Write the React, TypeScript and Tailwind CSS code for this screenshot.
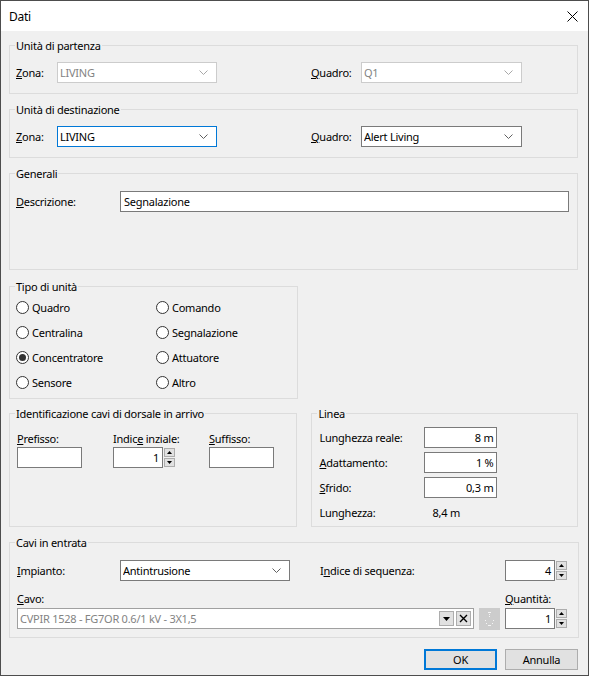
import type { ReactNode } from "react"

const font = "font-['Noto_Sans',sans-serif] text-[11px] leading-[15px] tracking-[-0.25px] text-black"

function Chevron({ disabled }: { disabled?: boolean }) {
  return (
    <svg width="9" height="5" viewBox="0 0 9 5" className="shrink-0">
      <path d="M0.5 0.5 L4.5 4.5 L8.5 0.5" fill="none" stroke={disabled ? "#a8a8a8" : "#606060"} strokeWidth="1" />
    </svg>
  )
}

function Combo({ value, w, state = "normal" }: { value: string; w: string; state?: "normal" | "focused" | "disabled" }) {
  const border =
    state === "focused" ? "border-[#0078d7]" : state === "disabled" ? "border-[#cccccc]" : "border-[#7a7a7a]"
  return (
    <div className={`${w} h-[21px] border ${border} bg-white flex items-center pl-[2px] pr-[8px]`}>
      <span className={`flex-1 truncate ${state === "disabled" ? "text-[#838383]" : ""}`}>{value}</span>
      <Chevron disabled={state === "disabled"} />
    </div>
  )
}

function TextBox({ value = "", w, right }: { value?: string; w: string; right?: boolean }) {
  return (
    <div className={`${w} h-[21px] border border-[#7a7a7a] bg-white flex items-center px-[3px] ${right ? "justify-end" : ""}`}>
      {value}
    </div>
  )
}

function Arrow({ up }: { up?: boolean }) {
  return (
    <svg width="5" height="3" viewBox="0 0 5 3">
      <path d={up ? "M2.5 0 L5 3 L0 3 Z" : "M0 0 L5 0 L2.5 3 Z"} fill="#000" />
    </svg>
  )
}

function Spinner({ value, w }: { value: string; w: string }) {
  return (
    <div className="flex items-center gap-[1px]">
      <TextBox value={value} w={w} right />
      <div className="flex flex-col gap-[1px]">
        <div className="w-[11px] h-[9px] border border-[#adadad] bg-[#e1e1e1] flex items-center justify-center">
          <Arrow up />
        </div>
        <div className="w-[11px] h-[9px] border border-[#adadad] bg-[#e1e1e1] flex items-center justify-center">
          <Arrow />
        </div>
      </div>
    </div>
  )
}

function Group({ title, className = "", children }: { title: string; className?: string; children: ReactNode }) {
  return (
    <fieldset className={`border border-[#dcdcdc] pl-[5px] ${className}`}>
      <legend className="px-[1px]">{title}</legend>
      {children}
    </fieldset>
  )
}

function Radio({ label, checked }: { label: string; checked?: boolean }) {
  return (
    <div className="flex items-center h-[25px]">
      <div className="w-[13px] h-[13px] rounded-full border border-[#333333] bg-white flex items-center justify-center">
        {checked && <div className="w-[7px] h-[7px] rounded-full bg-[#333333]" />}
      </div>
      <span className="ml-[3px]">{label}</span>
    </div>
  )
}

export default function App() {
  return (
    <div className={`w-[589px] h-[676px] border border-[#4d4d4d] flex flex-col ${font}`}>
      <div className="h-[30px] bg-white flex items-center justify-between pl-[8px] pr-[10px] shrink-0">
        <span className="text-[12px]">Dati</span>
        <svg width="11" height="11" viewBox="0 0 11 11">
          <path d="M0.5 0.5 L10.5 10.5 M10.5 0.5 L0.5 10.5" stroke="#000" strokeWidth="1" />
        </svg>
      </div>

      <div className="flex-1 bg-[#f0f0f0] pl-[8px] pr-[10px] pt-[7px] flex flex-col">
        <Group title="Unità di partenza" className="pt-[9px] pb-[10px]">
          <div className="flex items-center pl-[1px]">
            <span className="w-[41px]"><u>Z</u>ona:</span>
            <Combo value="LIVING" w="w-[160px]" state="disabled" />
            <span className="w-[50px] ml-[94px]"><u>Q</u>uadro:</span>
            <Combo value="Q1" w="w-[161px]" state="disabled" />
          </div>
        </Group>

        <Group title="Unità di destinazione" className="mt-[8px] pt-[9px] pb-[10px]">
          <div className="flex items-center pl-[1px]">
            <span className="w-[41px]"><u>Z</u>ona:</span>
            <Combo value="LIVING" w="w-[160px]" state="focused" />
            <span className="w-[50px] ml-[94px]"><u>Q</u>uadro:</span>
            <Combo value="Alert Living" w="w-[161px]" />
          </div>
        </Group>

        <Group title="Generali" className="mt-[8px] pt-[10px] h-[104px]">
          <div className="flex items-center pl-[1px]">
            <span className="w-[104px]"><u>D</u>escrizione:</span>
            <TextBox value="Segnalazione" w="w-[449px]" />
          </div>
        </Group>

        <Group title="Tipo di unità" className="mt-[9px] w-[289px] h-[120px] pt-[1px]">
          <div className="grid grid-cols-[140px_1fr] pl-[1px]">
            <Radio label="Quadro" />
            <Radio label="Comando" />
            <Radio label="Centralina" />
            <Radio label="Segnalazione" />
            <Radio label="Concentratore" checked />
            <Radio label="Attuatore" />
            <Radio label="Sensore" />
            <Radio label="Altro" />
          </div>
        </Group>

        <div className="flex gap-[14px] mt-[7px]">
          <Group title="Identificazione cavi di dorsale in arrivo" className="w-[289px] h-[121px] pt-[10px]">
            <div className="flex pl-[2px]">
              <div className="w-[96px] flex flex-col gap-[1px]">
                <span><u>P</u>refisso:</span>
                <TextBox w="w-[65px]" />
              </div>
              <div className="w-[96px] flex flex-col gap-[1px]">
                <span>Indic<u>e</u> inziale:</span>
                <Spinner value="1" w="w-[50px]" />
              </div>
              <div className="flex flex-col gap-[1px]">
                <span><u>S</u>uffisso:</span>
                <TextBox w="w-[65px]" />
              </div>
            </div>
          </Group>

          <Group title="Linea" className="w-[267px] h-[121px] pt-[6px]">
            <div className="flex flex-col gap-[4px] pl-[2px]">
              <div className="flex items-center">
                <span className="w-[105px]">Lunghezza reale:</span>
                <TextBox value="8 m" w="w-[73px]" right />
              </div>
              <div className="flex items-center">
                <span className="w-[105px]"><u>A</u>dattamento:</span>
                <TextBox value="1 %" w="w-[73px]" right />
              </div>
              <div className="flex items-center">
                <span className="w-[105px]"><u>S</u>frido:</span>
                <TextBox value="0,3 m" w="w-[73px]" right />
              </div>
              <div className="flex items-center mt-[3px]">
                <span className="w-[113px]">Lunghezza:</span>
                <span>8,4 m</span>
              </div>
            </div>
          </Group>
        </div>

        <Group title="Cavi in entrata" className="mt-[8px] h-[103px] pt-[10px] pr-[11px]">
          <div className="flex items-center pl-[2px]">
            <span className="w-[103px]"><u>I</u>mpianto:</span>
            <Combo value="Antintrusione" w="w-[170px]" />
            <span className="ml-[30px] flex-1">I<u>n</u>dice di sequenza:</span>
            <Spinner value="4" w="w-[50px]" />
          </div>
          <div className="flex items-end pl-[2px] mt-[10px]">
            <div className="flex flex-col gap-[2px]">
              <span><u>C</u>avo:</span>
              <div className="w-[457px] h-[21px] border border-[#a0a0a0] bg-white flex items-center pl-[2px] pr-[2px]">
                <span className="flex-1 truncate text-[#838383]">CVPIR 1528 - FG7OR 0.6/1 kV - 3X1,5</span>
                <div className="w-[15px] h-[15px] border border-[#adadad] bg-[#e1e1e1] flex items-center justify-center">
                  <svg width="7" height="4" viewBox="0 0 7 4">
                    <path d="M0 0 L7 0 L3.5 4 Z" fill="#000" />
                  </svg>
                </div>
                <div className="w-[15px] h-[15px] ml-[2px] border border-[#adadad] bg-[#e1e1e1] flex items-center justify-center">
                  <svg width="9" height="9" viewBox="0 0 9 9">
                    <path d="M1 1 L8 8 M8 1 L1 8" stroke="#000" strokeWidth="1.4" />
                  </svg>
                </div>
              </div>
            </div>
            <div className="w-[21px] h-[22px] ml-[5px] mb-[-1px] bg-[#cccccc] flex items-center justify-center">
              <svg width="11" height="14" viewBox="0 0 11 14">
                <g fill="#f4f4f4">
                  <rect x="4" y="0" width="3" height="1" />
                  <rect x="5" y="2" width="1" height="1" />
                  <rect x="5" y="4" width="1" height="1" />
                  <rect x="1" y="8" width="1" height="1" />
                  <rect x="9" y="8" width="1" height="1" />
                  <rect x="2" y="11" width="1" height="1" />
                  <rect x="8" y="11" width="1" height="1" />
                  <rect x="4" y="13" width="3" height="1" />
                </g>
              </svg>
            </div>
            <div className="flex flex-col gap-[2px] ml-[5px]">
              <span><u>Q</u>uantità:</span>
              <Spinner value="1" w="w-[50px]" />
            </div>
          </div>
        </Group>

        <div className="flex justify-end gap-[8px] mt-[11px]">
          <button className="w-[73px] h-[21px] border-2 border-[#0078d7] bg-[#e1e1e1] flex items-center justify-center">
            OK
          </button>
          <button className="w-[73px] h-[21px] border border-[#adadad] bg-[#e1e1e1] flex items-center justify-center">
            Annulla
          </button>
        </div>
      </div>
    </div>
  )
}
